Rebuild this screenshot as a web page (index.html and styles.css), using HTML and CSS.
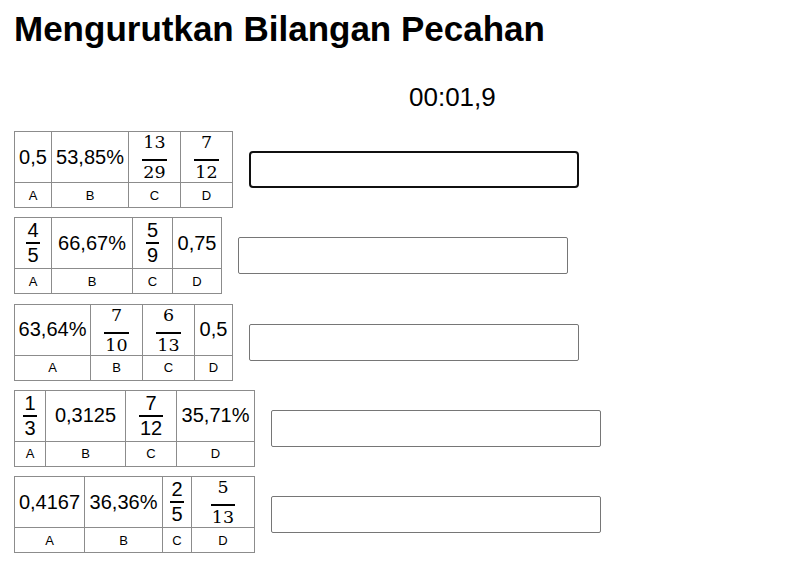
FILE: index.html
```html
<!DOCTYPE html>
<html lang="id">
<head>
<meta charset="utf-8">
<title>Mengurutkan Bilangan Pecahan</title>
<link rel="stylesheet" href="styles.css">
</head>
<body>
<main class="page">
  <h1 class="title">Mengurutkan Bilangan Pecahan</h1>
  <div class="timer">00:01,9</div>

  <div class="rows">
    <div class="row">
      <table class="set">
        <tr class="vals">
          <td class="w36">0,5</td>
          <td class="w76">53,85%</td>
          <td class="w51"><span class="frac math"><span class="num">13</span><span class="den">29</span></span></td>
          <td class="w51"><span class="frac math"><span class="num">7</span><span class="den">12</span></span></td>
        </tr>
        <tr class="labels"><td>A</td><td>B</td><td>C</td><td>D</td></tr>
      </table>
      <input class="answer focus" type="text">
    </div>

    <div class="row">
      <table class="set">
        <tr class="vals">
          <td class="w36"><span class="frac"><span class="num">4</span><span class="den">5</span></span></td>
          <td class="w80">66,67%</td>
          <td class="w39"><span class="frac"><span class="num">5</span><span class="den">9</span></span></td>
          <td class="w48">0,75</td>
        </tr>
        <tr class="labels"><td>A</td><td>B</td><td>C</td><td>D</td></tr>
      </table>
      <input class="answer" type="text">
    </div>

    <div class="row">
      <table class="set">
        <tr class="vals">
          <td class="w75">63,64%</td>
          <td class="w51"><span class="frac math"><span class="num">7</span><span class="den">10</span></span></td>
          <td class="w51"><span class="frac math"><span class="num">6</span><span class="den">13</span></span></td>
          <td class="w37">0,5</td>
        </tr>
        <tr class="labels"><td>A</td><td>B</td><td>C</td><td>D</td></tr>
      </table>
      <input class="answer" type="text">
    </div>

    <div class="row">
      <table class="set">
        <tr class="vals">
          <td class="w30"><span class="frac"><span class="num">1</span><span class="den">3</span></span></td>
          <td class="w79">0,3125</td>
          <td class="w50"><span class="frac"><span class="num">7</span><span class="den">12</span></span></td>
          <td class="w77">35,71%</td>
        </tr>
        <tr class="labels"><td>A</td><td>B</td><td>C</td><td>D</td></tr>
      </table>
      <input class="answer" type="text">
    </div>

    <div class="row">
      <table class="set">
        <tr class="vals">
          <td class="w69">0,4167</td>
          <td class="w77">36,36%</td>
          <td class="w28"><span class="frac"><span class="num">2</span><span class="den">5</span></span></td>
          <td class="w62"><span class="frac math"><span class="num">5</span><span class="den">13</span></span></td>
        </tr>
        <tr class="labels"><td>A</td><td>B</td><td>C</td><td>D</td></tr>
      </table>
      <input class="answer" type="text">
    </div>
  </div>
</main>
</body>
</html>
```

FILE: styles.css
```css
html, body {
  margin: 0;
  padding: 0;
  background: #fff;
}

body {
  font-family: "Liberation Sans", Arial, sans-serif;
  color: #000;
}

.page {
  padding: 9px 14px 0 14px;
}

.title {
  margin: 0;
  font-size: 35px;
  font-weight: bold;
  line-height: 40px;
}

.timer {
  margin-top: 33px;
  padding-left: 395px;
  font-size: 26px;
  line-height: 30px;
}

.rows {
  margin-top: 19px;
  display: flex;
  flex-direction: column;
  gap: 9.25px;
}

.row {
  display: flex;
  align-items: center;
  gap: 16px;
}

.set {
  border-collapse: collapse;
  border: 1px solid #8c8c8c;
}

.set td {
  border: 1px solid #8c8c8c;
  padding: 0;
  text-align: center;
  vertical-align: middle;
}

.vals td {
  height: 50px;
  font-size: 20px;
}

.labels td {
  height: 24px;
  font-size: 13px;
}

.w28 { width: 28px; }
.w30 { width: 30px; }
.w36 { width: 36px; }
.w37 { width: 37px; }
.w39 { width: 39px; }
.w48 { width: 48px; }
.w50 { width: 50px; }
.w51 { width: 51px; }
.w62 { width: 62px; }
.w69 { width: 69px; }
.w75 { width: 75px; }
.w76 { width: 76px; }
.w77 { width: 77px; }
.w79 { width: 79px; }
.w80 { width: 80px; }

.frac {
  display: inline-flex;
  flex-direction: column;
  align-items: stretch;
  vertical-align: middle;
  font-size: 20px;
}

.frac .num,
.frac .den {
  display: block;
  line-height: 23px;
  text-align: center;
  padding: 0 1px;
}

.frac .num {
  border-bottom: 2px solid #000;
}

.frac.math {
  font-family: "DejaVu Serif", "Liberation Serif", serif;
  font-size: 17.5px;
}

.frac.math .num {
  line-height: 20px;
  padding-bottom: 7px;
}

.frac.math .den {
  line-height: 20px;
  padding-top: 1px;
}

.answer {
  box-sizing: border-box;
  width: 330px;
  height: 37px;
  margin: 0;
  padding: 0 6px;
  border: 1px solid #767676;
  border-radius: 2px;
  background: #fff;
  font-family: "Liberation Sans", Arial, sans-serif;
  font-size: 16px;
}

.answer.focus {
  border: 2px solid #101010;
  border-radius: 4px;
}
```
